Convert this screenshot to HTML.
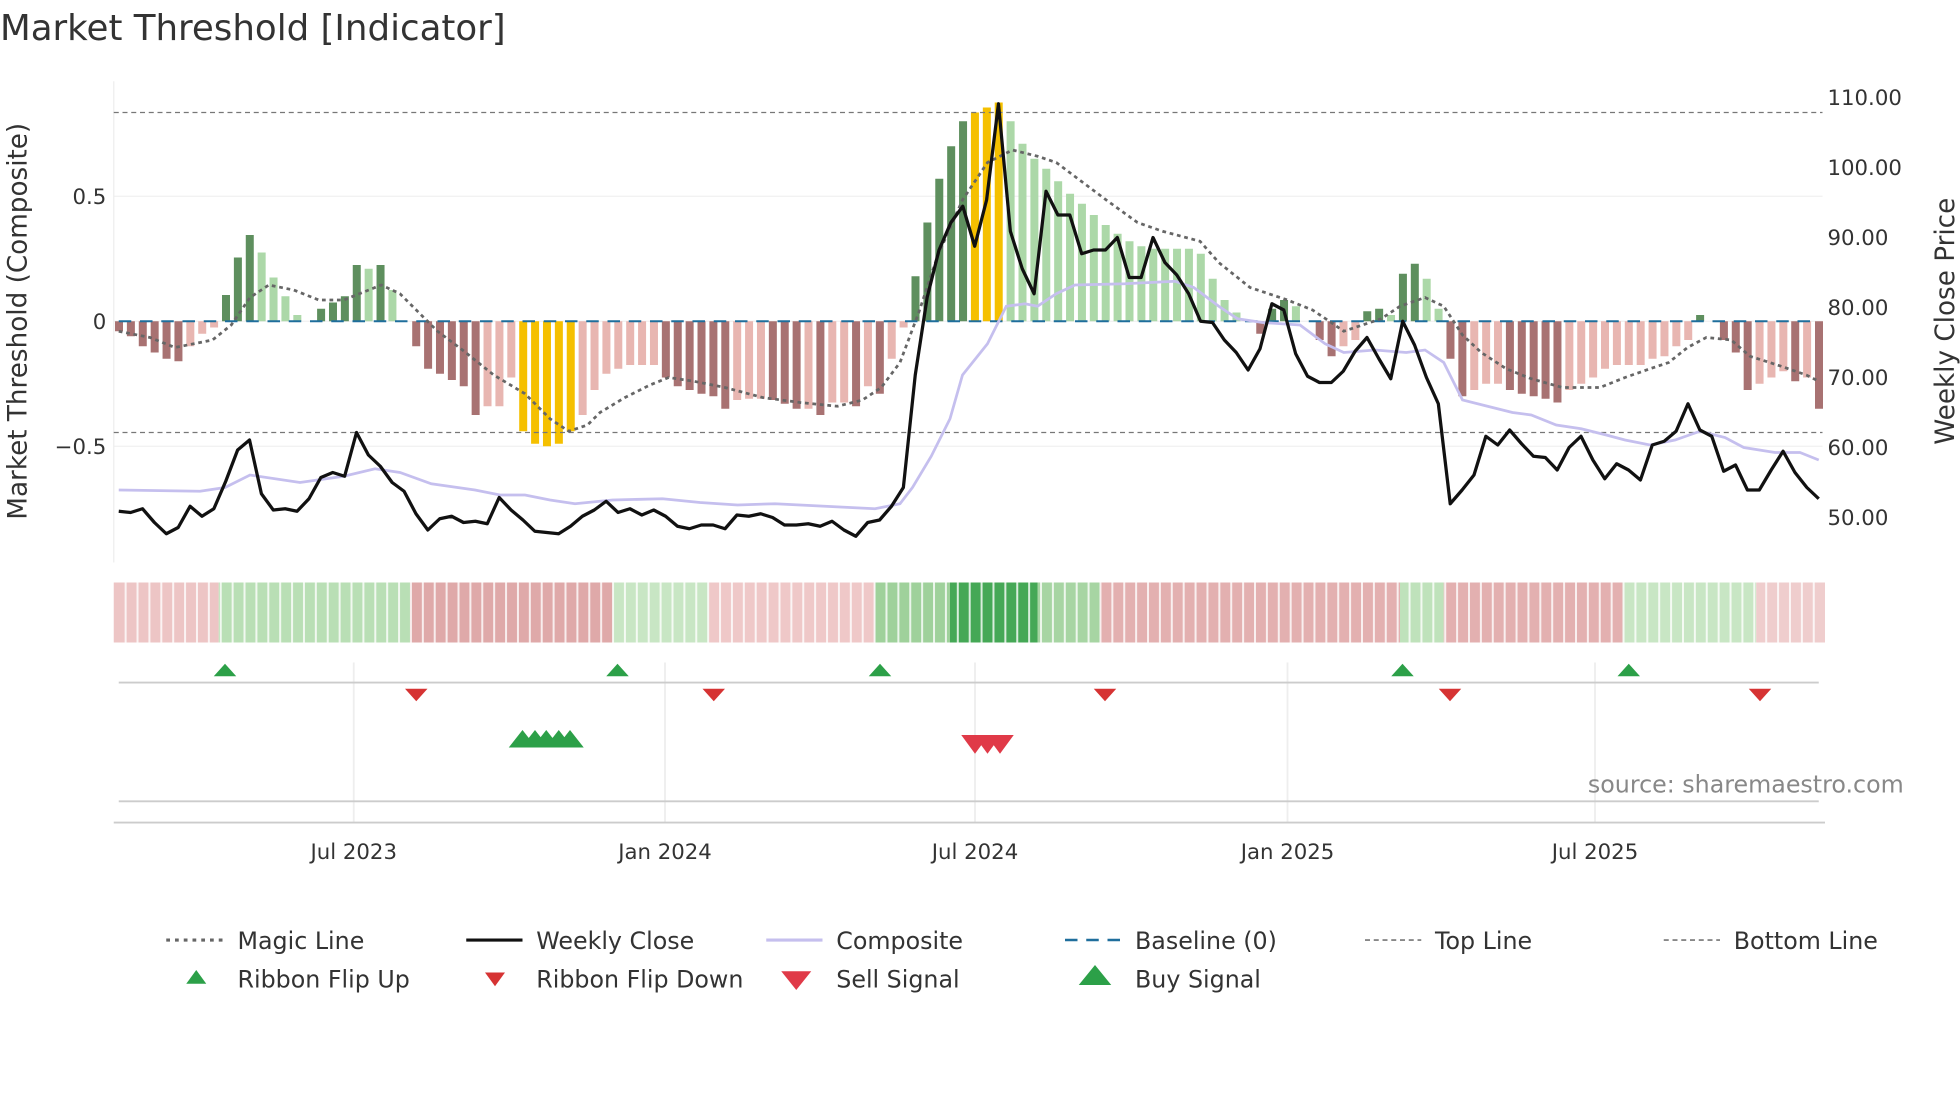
<!DOCTYPE html>
<html><head><meta charset="utf-8"><style>
html,body{margin:0;padding:0;background:#fff;width:1960px;height:1102px;overflow:hidden}
svg{display:block;font-family:"DejaVu Sans","Liberation Sans",sans-serif}
</style></head><body>
<svg id="s" width="1960" height="1102" viewBox="0 0 1568 881.6" xmlns="http://www.w3.org/2000/svg">
<rect width="1568" height="882" fill="#fff"/>
<text x="0" y="32" font-size="28.5" fill="#333">Market Threshold [Indicator]</text>
<g id="g"></g>
<g font-size="17" fill="#333">
<text x="85" y="163" text-anchor="end">0.5</text>
<text x="85" y="263" text-anchor="end">0</text>
<text x="85" y="363" text-anchor="end">−0.5</text>
<text x="1462" y="84">110.00</text>
<text x="1462" y="140">100.00</text>
<text x="1462" y="196">90.00</text>
<text x="1462" y="252">80.00</text>
<text x="1462" y="308">70.00</text>
<text x="1462" y="364">60.00</text>
<text x="1462" y="420">50.00</text>
<text x="283" y="687" text-anchor="middle">Jul 2023</text>
<text x="532" y="687" text-anchor="middle">Jan 2024</text>
<text x="780" y="687" text-anchor="middle">Jul 2024</text>
<text x="1030" y="687" text-anchor="middle">Jan 2025</text>
<text x="1276" y="687" text-anchor="middle">Jul 2025</text>
</g>
<text transform="translate(21,257) rotate(-90)" font-size="21" fill="#333" text-anchor="middle">Market Threshold (Composite)</text>
<text transform="translate(1563,257) rotate(-90)" font-size="21" fill="#333" text-anchor="middle">Weekly Close Price</text>
<text x="1523" y="634" font-size="19" fill="#888" text-anchor="end">source: sharemaestro.com</text>
<g font-size="19" fill="#333">
<line x1="133" y1="752" x2="178" y2="752" stroke="#666" stroke-width="2.5" stroke-dasharray="3,4"/><text x="190" y="759">Magic Line</text>
<line x1="373" y1="752" x2="418" y2="752" stroke="#111" stroke-width="2.5"/><text x="429" y="759">Weekly Close</text>
<line x1="613" y1="752" x2="658" y2="752" stroke="#c5bfee" stroke-width="2.5"/><text x="669" y="759">Composite</text>
<line x1="852" y1="752" x2="897" y2="752" stroke="#1f6e9c" stroke-width="2" stroke-dasharray="10,7"/><text x="908" y="759">Baseline (0)</text>
<line x1="1092" y1="752" x2="1137" y2="752" stroke="#888" stroke-width="1.5" stroke-dasharray="4,3"/><text x="1148" y="759">Top Line</text>
<line x1="1331" y1="752" x2="1376" y2="752" stroke="#888" stroke-width="1.5" stroke-dasharray="4,3"/><text x="1387" y="759">Bottom Line</text>
<polygon points="149,787 157,776 165,787" fill="#2ca048"/><text x="190" y="790">Ribbon Flip Up</text>
<polygon points="388,778 396,789 404,778" fill="#d63333"/><text x="429" y="790">Ribbon Flip Down</text>
<polygon points="625,777 637,792 649,777" fill="#e03a48"/><text x="669" y="790">Sell Signal</text>
<polygon points="863,788 876,772 889,788" fill="#2ca048"/><text x="908" y="790">Buy Signal</text>
</g>
</svg>
<script>
var NS="http://www.w3.org/2000/svg",g=document.getElementById("g");
function el(t,a){var e=document.createElementNS(NS,t);for(var k in a)e.setAttribute(k,a[k]);g.appendChild(e);return e;}
[157,257,357].forEach(function(y){el("line",{x1:91,x2:1458,y1:y,y2:y,stroke:"#f0f0f0"})});
el("line",{x1:91,x2:91,y1:65,y2:450,stroke:"#eee"});
[283,532,780,1030,1276].forEach(function(x){el("line",{x1:x,x2:x,y1:530,y2:658,stroke:"#eee","stroke-width":1.5})});
var v=[-8,-12,-20,-25,-30,-32,-20,-10,-5,21,51,69,55,35,20,5,0,10,15,20,45,42,45,25,0,-20,-38,-42,-47,-52,-75,-68,-68,-45,-88,-98,-100,-98,-88,-75,-55,-42,-38,-35,-35,-35,-45,-52,-55,-58,-60,-70,-63,-62,-62,-63,-66,-70,-70,-75,-65,-65,-68,-52,-58,-30,-5,36,79,114,140,160,167,171,175,160,142,130,122,112,102,94,85,77,70,64,60,58,58,58,58,54,34,17,7,0,-10,10,17,12,0,-15,-28,-20,-15,8,10,5,38,46,34,10,-30,-60,-55,-50,-50,-55,-58,-60,-62,-65,-55,-50,-45,-38,-35,-35,-35,-30,-28,-20,-15,5,0,-15,-25,-55,-50,-45,-40,-48,-45,-70];
var dx=(1455-95)/(v.length-1);
v.forEach(function(h,i){var x=95+i*dx,p=i?v[i-1]:0,c;
 if(h>=0){c=(h>=165)?"#f5c000":(h>p?"#5e8f5e":"#acd8a8");}
 else {c=(h<=-86)?"#f5c000":(h<p?"#a87272":"#e8b6b1");}
 if(h==0)return;
 el("rect",{x:x-3,y:h>0?257-h:257,width:6.4,height:Math.abs(h),fill:c});});
el("line",{x1:91,x2:1458,y1:90,y2:90,stroke:"#777","stroke-dasharray":"4,3"});
el("line",{x1:91,x2:1458,y1:346,y2:346,stroke:"#777","stroke-dasharray":"4,3"});
el("line",{x1:95,x2:1455,y1:257,y2:257,stroke:"#1f6e9c","stroke-width":1.6,"stroke-dasharray":"10,7"});
function pl(pts,a){a.points=pts.join(" ");a.fill="none";el("polyline",a);}
var comp=[[95,392],[160,393],[180,390],[200,380],[240,386],[275,381],[300,375],[320,378],[345,387],[380,392],[400,396],[420,396],[440,400],[460,403],[490,400],[530,399],[560,402],[590,404],[620,403],[660,405],[700,407],[720,403],[730,390],[745,365],[760,335],[770,300],[790,275],[805,245],[820,243],[830,245],[845,235],[860,228],[900,227],[940,225],[955,230],[975,245],[990,255],[1010,258],[1040,260],[1060,275],[1075,282],[1100,280],[1125,282],[1140,280],[1155,290],[1170,320],[1190,325],[1210,330],[1225,332],[1245,340],[1265,343],[1285,348],[1300,352],[1320,356],[1340,352],[1360,345],[1380,350],[1395,358],[1420,362],[1440,362],[1455,368]];
pl(comp,{stroke:"#c5bfee","stroke-width":2.2});
var mag=[[95,265],[120,270],[140,278],[170,272],[185,260],[200,238],[215,228],[235,232],[255,240],[275,240],[295,232],[305,228],[320,235],[335,250],[350,265],[370,280],[395,300],[420,315],[440,335],[455,345],[470,340],[480,330],[500,318],[520,308],[535,302],[555,305],[580,310],[610,318],[640,322],[670,325],[690,320],[705,310],[720,290],[735,250],[750,205],[770,160],[790,130],[810,120],[830,125],[845,130],[865,145],[885,160],[910,178],[930,185],[960,193],[975,210],[1000,230],[1030,240],[1050,248],[1065,258],[1075,265],[1090,260],[1105,255],[1120,245],[1140,238],[1155,245],[1170,268],[1185,282],[1205,295],[1225,303],[1250,310],[1280,310],[1300,302],[1320,295],[1335,290],[1350,278],[1365,270],[1385,272],[1400,285],[1425,293],[1445,300],[1455,305]];
pl(mag,{stroke:"#666","stroke-width":2.2,"stroke-dasharray":"3,3"});
var wc=[409,410,407,418,427,422,405,413,407,385,360,352,395,408,407,409,399,382,378,381,346,364,373,386,393,411,424,415,413,418,417,419,398,408,416,425,426,427,421,413,408,401,410,407,412,408,413,421,423,420,420,423,412,413,411,414,420,420,419,421,417,424,429,418,416,405,390,300,238,200,178,165,197,160,83,185,215,235,153,172,172,203,200,200,190,222,222,190,210,220,235,257,258,272,282,296,279,243,248,283,301,306,306,297,281,270,287,303,257,276,302,323,403,392,380,349,356,344,355,365,366,376,358,349,368,383,371,376,384,356,353,345,323,344,349,377,372,392,392,376,361,378,390,399];
var wdx=(1455-95)/(wc.length-1);
pl(wc.map(function(y,i){return [95+i*wdx,y]}),{stroke:"#111","stroke-width":2.6,"stroke-linejoin":"round"});
var segs=[[91,175,"#edc5c5"],[175,328,"#b9dfb5"],[328,490,"#dfa9a9"],[490,567,"#c8e6c4"],[567,700,"#efc8c8"],[700,760,"#9fd19b"],[760,830,"#45a856"],[830,880,"#a7d5a3"],[880,1120,"#e3b0b0"],[1120,1155,"#bfe2bb"],[1155,1298,"#e3b0b0"],[1298,1405,"#c8e6c4"],[1405,1460,"#efcdcd"]];
segs.forEach(function(s){el("rect",{x:s[0],y:466,width:s[1]-s[0],height:48,fill:s[2]})});
for(var x=91+dx;x<1460;x+=dx)el("line",{x1:x,x2:x,y1:466,y2:514,stroke:"#fff","stroke-width":1.6,opacity:0.8});
el("line",{x1:95,x2:1455,y1:546,y2:546,stroke:"#ccc","stroke-width":1.5});
el("line",{x1:95,x2:1455,y1:641,y2:641,stroke:"#ccc","stroke-width":1.5});
el("line",{x1:91,x2:1460,y1:658,y2:658,stroke:"#ccc","stroke-width":1.5});
[180,494,704,1122,1303].forEach(function(x){el("polygon",{points:(x-9)+",541 "+x+",531 "+(x+9)+",541",fill:"#2ca048"})});
[333,571,884,1160,1408].forEach(function(x){el("polygon",{points:(x-9)+",551 "+x+",561 "+(x+9)+",551",fill:"#d63333"})});
[418,428,437,447,456].forEach(function(x){el("polygon",{points:(x-11)+",598 "+x+",584 "+(x+11)+",598",fill:"#2ca048"})});
[780,790,800].forEach(function(x){el("polygon",{points:(x-11)+",588 "+x+",603 "+(x+11)+",588",fill:"#e03a48"})});
</script>
</body></html>
